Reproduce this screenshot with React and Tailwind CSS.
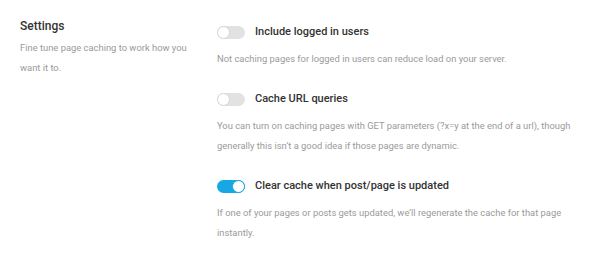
import React, { useState } from 'react';

const Toggle = ({ on, onClick }) => (
  <button
    type="button"
    onClick={onClick}
    className={`relative h-[13px] w-[28px] shrink-0 rounded-full ${on ? 'bg-[#17a8e3]' : 'bg-[#e2e2e2]'}`}
  >
    <span
      className={`absolute top-0 h-[13px] w-[13px] rounded-full border bg-white ${
        on ? 'left-[15px] border-[#17a8e3]' : 'left-0 border-[#d6d6d6]'
      }`}
    ></span>
  </button>
);

const options = [
  {
    key: 'logged',
    label: 'Include logged in users',
    desc: 'Not caching pages for logged in users can reduce load on your server.',
  },
  {
    key: 'queries',
    label: 'Cache URL queries',
    desc: "You can turn on caching pages with GET parameters (?x=y at the end of a url), though generally this isn\u2019t a good idea if those pages are dynamic.",
  },
  {
    key: 'clear',
    label: 'Clear cache when post/page is updated',
    desc: 'If one of your pages or posts gets updated, we\u2019ll regenerate the cache for that page instantly.',
  },
];

export default function App() {
  const [settings, setSettings] = useState({ logged: false, queries: false, clear: true });

  return (
    <div className="flex h-[256px] w-[600px] bg-white pl-[20px] font-['Roboto',sans-serif]">
      {/* Left column */}
      <div className="w-[197px] shrink-0 pt-[18px]">
        <h3 className="text-[12px] font-medium leading-[16px] text-[#333]">Settings</h3>
        <p className="mt-[4px] w-[178px] text-[9.4px] leading-[20px] text-[#9a9a9a]">
          Fine tune page caching to work how you want it to.
        </p>
      </div>

      {/* Options */}
      <div className="flex w-[365px] flex-col gap-[22px] pt-[24px]">
        {options.map((o) => (
          <div key={o.key}>
            <div className="flex items-center gap-[10px]">
              <Toggle
                on={settings[o.key]}
                onClick={() => setSettings((prev) => ({ ...prev, [o.key]: !prev[o.key] }))}
              />
              <span className="text-[11px] font-medium leading-[16px] text-[#333]">{o.label}</span>
            </div>
            <p className="mt-[9px] text-[9.4px] leading-[20px] text-[#9a9a9a]">{o.desc}</p>
          </div>
        ))}
      </div>
    </div>
  );
}
